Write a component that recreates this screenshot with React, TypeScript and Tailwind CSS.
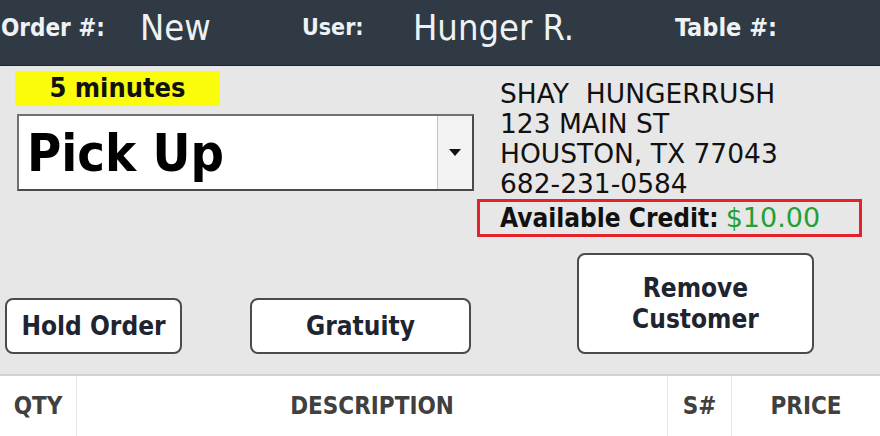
import React from "react";

const sans = "font-['DejaVu_Sans_Condensed','DejaVu_Sans',sans-serif]";
const wide = "font-['DejaVu_Sans',sans-serif]";

function HeaderBar() {
  return (
    <div className={`h-[66px] pb-[10px] bg-[#2f3a44] flex items-center text-[#eef2f4] ${sans} border-b border-[#1d252b]`}>
      <span className="w-[140px] pl-[1px] text-[24px] font-bold">Order #:</span>
      <span className="w-[162px] text-[36px]">New</span>
      <span className="w-[111px] text-[23px] font-bold">User:</span>
      <span className="w-[262px] text-[36px]">Hunger R.</span>
      <span className="text-[25px] font-bold">Table #:</span>
    </div>
  );
}

function OrderTypeSelect() {
  return (
    <div className="mt-[8px] ml-[2px] w-[457px] h-[77px] bg-white border-2 border-t-[#707070] border-l-[#707070] border-r-[#4a4a4a] border-b-[#4a4a4a] flex">
      <div className={`flex-1 flex items-center pl-[8px] text-[52px] font-bold text-black ${sans}`}>
        Pick Up
      </div>
      <div className="w-[35px] bg-[#f3f3f3] border-l border-[#c4c4c4] flex items-center justify-center">
        <svg width="12" height="8" viewBox="0 0 12 8">
          <path d="M0 0 L12 0 L6 7 Z" fill="#111" />
        </svg>
      </div>
    </div>
  );
}

function CustomerInfo() {
  return (
    <div className={`pt-[13px] ${wide} text-[26.5px] leading-[30px] text-[#111]`}>
      <div className="pl-[23px]">SHAY&nbsp; HUNGERRUSH</div>
      <div className="pl-[23px]">123 MAIN ST</div>
      <div className="pl-[23px]">HOUSTON, TX 77043</div>
      <div className="pl-[23px]">682-231-0584</div>
      <div className="w-[385px] h-[38px] border-[3px] border-[#e3222b] flex items-center pl-[20px]">
        <span className={`${sans} font-bold text-[26px]`}>Available Credit:</span>
        <span className={`ml-[7px] ${wide} text-[27px] text-[#23a033]`}>$10.00</span>
      </div>
    </div>
  );
}

function ActionButton({ label, className }: { label: React.ReactNode; className: string }) {
  return (
    <div
      className={`bg-white border-2 border-[#4b4b4b] rounded-[8px] flex items-center justify-center text-center font-bold text-[26px] leading-[31px] text-[#1e2430] ${sans} ${className}`}
    >
      {label}
    </div>
  );
}

function TableHeader() {
  const cell = `flex items-center justify-center font-bold text-[24px] text-[#404040] ${sans}`;
  return (
    <div className="h-[62px] bg-white border-t-2 border-[#d2d2d2] flex">
      <div className={`${cell} w-[77px] border-r border-[#e2e2e2]`}>QTY</div>
      <div className={`${cell} w-[591px] border-r border-[#e2e2e2]`}>DESCRIPTION</div>
      <div className={`${cell} w-[64px] border-r border-[#e2e2e2]`}>S#</div>
      <div className={`${cell} flex-1`}>PRICE</div>
    </div>
  );
}

export default function App() {
  return (
    <div className="w-[880px] h-[436px] bg-[#e7e7e7] flex flex-col overflow-hidden">
      <HeaderBar />
      <div className="h-[308px] flex flex-col">
        <div className="flex">
          <div className="w-[477px] pl-[15px] pt-[5px]">
            <div className={`w-[205px] h-[35px] bg-[#fbfb0c] flex items-center justify-center text-[27px] font-bold text-[#111] ${sans}`}>
              5 minutes
            </div>
            <OrderTypeSelect />
          </div>
          <CustomerInfo />
        </div>
        <div className="mt-auto mb-[20px] flex items-end">
          <ActionButton label="Hold Order" className="ml-[5px] w-[177px] h-[56px]" />
          <ActionButton label="Gratuity" className="ml-[68px] w-[221px] h-[56px]" />
          <ActionButton
            label={
              <span>
                Remove
                <br />
                Customer
              </span>
            }
            className="ml-[106px] w-[237px] h-[101px]"
          />
        </div>
      </div>
      <TableHeader />
    </div>
  );
}
